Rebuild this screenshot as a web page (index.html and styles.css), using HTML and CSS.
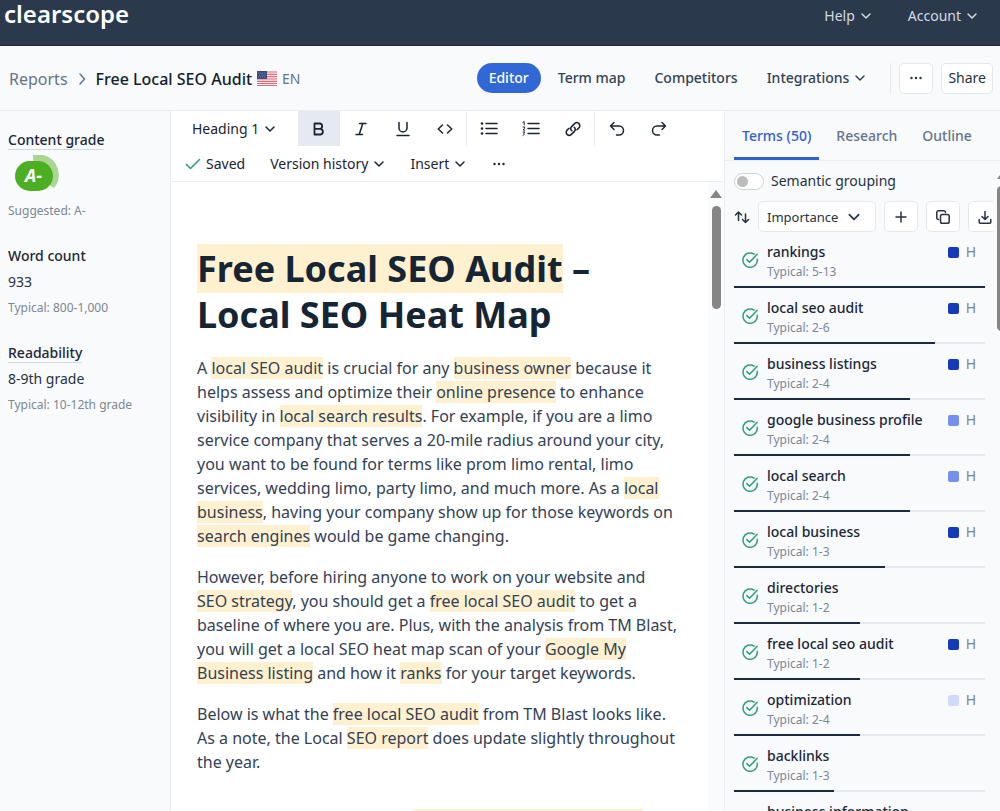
FILE: index.html
```html
<!DOCTYPE html>
<html lang="en">
<head>
<meta charset="utf-8">
<title>Free Local SEO Audit</title>
<link rel="stylesheet" href="styles.css">
</head>
<body>
<svg class="sprite" aria-hidden="true">
  <symbol id="chev" viewBox="0 0 12 12"><path d="M2 4 6 8 10 4"/></symbol>
  <symbol id="done" viewBox="0 0 18 18"><path d="M16.300 8.300A7.200 7.200 0 1 1 13.200 3.200"/><path d="M5.800 8.600 8.600 11.300 16.200 3.200"/></symbol>
  <symbol id="dots" viewBox="0 0 16 16"><g class="solid"><circle cx="3.500" cy="8" r="1.200"/><circle cx="8" cy="8" r="1.200"/><circle cx="12.500" cy="8" r="1.200"/></g></symbol>
</svg>
<div class="app">
  <header class="topbar">
    <a class="logo" href="#">clearscope</a>
    <nav class="topnav">
      <button>Help <svg class="ico s12"><use href="#chev"/></svg></button>
      <button>Account <svg class="ico s12"><use href="#chev"/></svg></button>
    </nav>
  </header>

  <div class="subbar">
    <nav class="crumbs">
      <a href="#">Reports</a>
      <svg class="ico s12 sep" viewBox="0 0 12 12"><path d="M4 1 8.500 6 4 11"/></svg>
      <strong>Free Local SEO Audit</strong>
      <svg class="flag" viewBox="0 0 20 15"><rect width="20" height="15" fill="#f5e9ec"/><path d="M0 1h20M0 3.400h20M0 5.700h20M0 8h20M0 10.300h20M0 12.500h20M0 14.500h20" stroke="#dc7079" stroke-width="1.200"/><rect width="10" height="8" fill="#3a4c80"/><path d="M1 2h8M2 4h7M1 6h8" stroke="#8792b5" stroke-width=".7" stroke-dasharray="1 1"/></svg>
      <span class="lang">EN</span>
    </nav>
    <nav class="views">
      <a class="pill" href="#">Editor</a>
      <a href="#">Term map</a>
      <a href="#">Competitors</a>
      <button>Integrations <svg class="ico s12"><use href="#chev"/></svg></button>
    </nav>
    <div class="actions">
      <button class="box" aria-label="More"><svg class="ico s16"><use href="#dots"/></svg></button>
      <button class="box">Share</button>
    </div>
  </div>

  <div class="main">
    <aside class="stats">
      <section>
        <h2 class="tip">Content grade</h2>
        <svg class="grade" viewBox="0 0 46 38" role="img" aria-label="Grade A minus"><path d="M19 0A20.500 20.500 0 0 1 40 33L20 20Z" fill="#a9d693"/><rect x="1" y="6" width="38" height="30" rx="15" fill="#4caf21"/><text x="11" y="27">A-</text></svg>
        <p class="hint">Suggested: A-</p>
      </section>
      <section>
        <h2>Word count</h2>
        <p>933</p>
        <p class="hint">Typical: 800-1,000</p>
      </section>
      <section>
        <h2 class="tip">Readability</h2>
        <p>8-9th grade</p>
        <p class="hint">Typical: 10-12th grade</p>
      </section>
    </aside>

    <main class="editor">
      <div class="tools">
        <div class="toolrow">
          <label class="pick style"><select aria-label="Text style"><option>Heading 1</option></select><svg class="ico s12"><use href="#chev"/></svg></label>
          <button class="tool on" aria-label="Bold"><svg class="ico s16" viewBox="0 0 16 16"><path d="M3.500 2.500h5.500a2.700 2.700 0 0 1 0 5.300H3.500zM3.500 7.800h6a2.900 2.900 0 0 1 0 5.700h-6z" stroke-width="1.800"/></svg></button>
          <button class="tool" aria-label="Italic"><svg class="ico s16" viewBox="0 0 16 16"><path d="M6.500 2.500H13M3 13.500h6.500M9.800 2.500 6.200 13.500"/></svg></button>
          <button class="tool" aria-label="Underline"><svg class="ico s16" viewBox="0 0 16 16"><path d="M4 1.500V7a4 4 0 0 0 8 0V1.500M2 14.500h12"/></svg></button>
          <button class="tool" aria-label="Code"><svg class="ico s16" viewBox="0 0 16 16"><path d="M5.500 4 1.200 8l4.300 4M10.500 4l4.300 4-4.300 4"/></svg></button>
          <button class="tool split" aria-label="Bulleted list"><svg class="ico s18" viewBox="0 0 18 18"><path d="M6 3.500h11M6 8.500h11M6 13.500h11"/><g class="solid"><circle cx="2" cy="3.500" r="1.300"/><circle cx="2" cy="8.500" r="1.300"/><circle cx="2" cy="13.500" r="1.300"/></g></svg></button>
          <button class="tool" aria-label="Numbered list"><svg class="ico s18" viewBox="0 0 18 18"><path d="M6 3.500h11M6 8.500h11M6 13.500h11"/><path stroke-width="1" d="M1 2.300 2.200 1.500V5M1 7h1.600v1.400L1 10h1.800M1 12h1.800l-1 1.300q1.600 1-.8 2.200"/></svg></button>
          <button class="tool" aria-label="Link"><svg class="ico s16" viewBox="0 0 16 16"><path d="M6.800 9.800A3 3 0 0 1 6.600 5.600L9.600 2.600A3 3 0 0 1 13.900 6.900L12 8.800M9.200 6.200A3 3 0 0 1 9.400 10.400L6.400 13.400A3 3 0 0 1 2.100 9.100L4 7.200"/></svg></button>
          <button class="tool split" aria-label="Undo"><svg class="ico s16" viewBox="0 0 16 16"><path d="M5 1.500 1.500 5 5 8.500M1.500 5h8.500a4.500 4.500 0 0 1 0 9H7.500"/></svg></button>
          <button class="tool" aria-label="Redo"><svg class="ico s16" viewBox="0 0 16 16"><path d="M11 1.500 14.500 5 11 8.500M14.500 5H6a4.500 4.500 0 0 0 0 9h2.500"/></svg></button>
        </div>
        <div class="toolrow second">
          <span class="saved"><svg class="ico s16" viewBox="0 0 16 16"><path d="M1.500 8.500 5.500 12.500 14.500 3.500"/></svg>Saved</span>
          <button>Version history <svg class="ico s12"><use href="#chev"/></svg></button>
          <button>Insert <svg class="ico s12"><use href="#chev"/></svg></button>
          <button aria-label="More tools"><svg class="ico s16"><use href="#dots"/></svg></button>
        </div>
      </div>
      <div class="canvas">
        <article class="doc">
          <h1><mark>Free Local SEO Audit</mark> – Local SEO Heat Map</h1>
          <p>A <mark>local SEO audit</mark> is crucial for any <mark>business owner</mark> because it helps assess and optimize their <mark>online presence</mark> to enhance visibility in <mark>local search results</mark>. For example, if you are a limo service company that serves a 20-mile radius around your city, you want to be found for terms like prom limo rental, limo services, wedding limo, party limo, and much more. As a <mark>local business</mark>, having your company show up for those keywords on <mark>search engines</mark> would be game changing.</p>
          <p>However, before hiring anyone to work on your website and <mark>SEO&nbsp;strategy</mark>, you should get a <mark>free local SEO audit</mark> to get a baseline of where you are. Plus, with the analysis from TM Blast, you will get a local SEO heat map scan of your <mark>Google My Business listing</mark> and how it <mark>ranks</mark> for your target keywords.</p>
          <p>Below is what the <mark>free local SEO audit</mark> from TM Blast looks like. As a note, the Local <mark>SEO report</mark> does update slightly throughout the year.</p>
          <div class="next"></div>
        </article>
        <div class="scroll"><svg viewBox="0 0 12 8"><path d="M6 0 12 8H0z"/></svg><i></i></div>
      </div>
    </main>

    <aside class="side">
      <nav class="tabs">
        <a class="cur" href="#">Terms (50)</a><a href="#">Research</a><a href="#">Outline</a>
      </nav>
      <div class="sidebody">
        <div class="terms">
          <label class="toggle"><input type="checkbox">Semantic grouping</label>
          <div class="filters">
            <svg class="ico s16" viewBox="0 0 16 16"><path d="M4.500 11.500V3M1.500 6l3-3 3 3M11.500 5v8.500M8.500 10.500l3 3 3-3"/></svg>
            <label class="pick sort"><select aria-label="Sort by"><option>Importance</option></select><svg class="ico s14"><use href="#chev"/></svg></label>
            <button class="box" aria-label="Add"><svg class="ico s14" viewBox="0 0 14 14"><path d="M7 2v10M2 7h10"/></svg></button>
            <button class="box" aria-label="Copy"><svg class="ico s14" viewBox="0 0 14 14"><rect x="4.500" y="4.500" width="8.700" height="8.700" rx="1.800"/><path d="M2.500 9.500A1.700 1.700 0 0 1 .8 7.800V2.500A1.700 1.700 0 0 1 2.500.8h5.300A1.700 1.700 0 0 1 9.500 2.500"/></svg></button>
            <button class="box" aria-label="Download"><svg class="ico s14" viewBox="0 0 14 14"><path d="M7 1.500v8M4 6.500l3 3 3-3M1.200 9.500v2.700a1 1 0 0 0 1 1h9.600a1 1 0 0 0 1-1V9.500"/></svg></button>
          </div>
          <ul class="list">
            <li><svg class="ico s18"><use href="#done"/></svg><div><b>rankings</b><small>Typical: 5-13</small></div><span class="imp"><i class="hi"></i>H</span><div class="bar"><i style="width:100%"></i></div></li>
            <li><svg class="ico s18"><use href="#done"/></svg><div><b>local seo audit</b><small>Typical: 2-6</small></div><span class="imp"><i class="hi"></i>H</span><div class="bar"><i style="width:80%"></i></div></li>
            <li><svg class="ico s18"><use href="#done"/></svg><div><b>business listings</b><small>Typical: 2-4</small></div><span class="imp"><i class="hi"></i>H</span><div class="bar"><i style="width:70%"></i></div></li>
            <li><svg class="ico s18"><use href="#done"/></svg><div><b>google business profile</b><small>Typical: 2-4</small></div><span class="imp"><i class="mid"></i>H</span><div class="bar"><i style="width:70%"></i></div></li>
            <li><svg class="ico s18"><use href="#done"/></svg><div><b>local search</b><small>Typical: 2-4</small></div><span class="imp"><i class="mid"></i>H</span><div class="bar"><i style="width:70%"></i></div></li>
            <li><svg class="ico s18"><use href="#done"/></svg><div><b>local business</b><small>Typical: 1-3</small></div><span class="imp"><i class="hi"></i>H</span><div class="bar"><i style="width:60%"></i></div></li>
            <li><svg class="ico s18"><use href="#done"/></svg><div><b>directories</b><small>Typical: 1-2</small></div><div class="bar"><i style="width:50%"></i></div></li>
            <li><svg class="ico s18"><use href="#done"/></svg><div><b>free local seo audit</b><small>Typical: 1-2</small></div><span class="imp"><i class="hi"></i>H</span><div class="bar"><i style="width:50%"></i></div></li>
            <li><svg class="ico s18"><use href="#done"/></svg><div><b>optimization</b><small>Typical: 2-4</small></div><span class="imp"><i class="low"></i>H</span><div class="bar"><i style="width:50%"></i></div></li>
            <li><svg class="ico s18"><use href="#done"/></svg><div><b>backlinks</b><small>Typical: 1-3</small></div><div class="bar"><i style="width:40%"></i></div></li>
            <li><svg class="ico s18"><use href="#done"/></svg><div><b>business information</b></div></li>
          </ul>
        </div>
        <div class="edge"><svg viewBox="0 0 12 8"><path d="M6 0 12 8H0z"/></svg><i></i></div>
      </div>
    </aside>
  </div>
</div>
</body>
</html>
```
FILE: styles.css
```css
* { box-sizing: border-box; }
body { margin: 0; font: 14px/20px "Noto Sans", "Open Sans", sans-serif; color: #263341; background: #f8fafc; }
button, select { font: inherit; color: inherit; background: none; border: 0; padding: 0; }
button { display: inline-flex; align-items: center; justify-content: center; gap: 5px; white-space: nowrap; }
a { color: inherit; text-decoration: none; }
h1, h2, p, ul { margin: 0; padding: 0; }
svg { display: block; flex: none; }
.sprite { position: absolute; width: 0; height: 0; }
.ico { fill: none; stroke: currentColor; stroke-width: 1.5; stroke-linecap: round; stroke-linejoin: round; }
.solid { fill: currentColor; stroke: none; }
.s12 { width: 12px; height: 12px; }
.s14 { width: 14px; height: 14px; }
.s16 { width: 16px; height: 16px; }
.s18 { width: 18px; height: 18px; }

.app { height: 100vh; display: flex; flex-direction: column; overflow: hidden; }
.topbar { flex: none; height: 46px; padding: 0 22px 14px 4px; display: flex; align-items: center; justify-content: space-between; background: #2b394d; border-bottom: 1px solid #1e2c3c; color: #d3dae3; }
.logo { font-size: 24px; font-weight: 600; line-height: 28px; margin-bottom: 4px; color: #fff; }
.topnav { display: flex; gap: 36px; }

.subbar { flex: none; height: 65px; display: flex; align-items: center; padding: 0 7px 0 9px; border-bottom: 1px solid #e9eef4; }
.crumbs { display: flex; align-items: center; padding-top: 1px; font-size: 16px; color: #64748b; white-space: nowrap; }
.crumbs .sep { margin: 0 8px; }
.crumbs strong { font-weight: 500; color: #131e2e; }
.crumbs .lang { font-size: 14px; }
.flag { width: 20px; height: 15px; margin: 0 5px; }
.views { margin-left: auto; display: flex; align-items: center; gap: 29px; font-weight: 500; color: #334354; }
.pill { padding: 5px 12px; margin-right: -12px; border-radius: 16px; background: #3268d5; color: #fff; }
.actions { display: flex; gap: 8px; margin-left: 24px; padding-left: 8px; border-left: 1px solid #e5eaf1; }
.box { height: 31px; min-width: 34px; padding: 0 6px; background: #fff; border: 1px solid #e3e8ef; border-radius: 5px; }

.main { flex: 1; min-height: 0; display: grid; grid-template-columns: 171px minmax(0, 1fr) 275px; }
.stats { padding: 19px 8px; border-right: 1px solid #e9eef4; display: flex; flex-direction: column; gap: 25px; }
.stats section { display: flex; flex-direction: column; align-items: flex-start; gap: 6px; }
.stats h2 { font-size: 14px; font-weight: 500; color: #1b2738; }
.stats .tip { border-bottom: 1px solid #d3d9e2; line-height: 19px; }
.hint { font-size: 12px; color: #7b8796; }
.grade { width: 46px; height: 38px; margin: -1px 6px 2px; }
.grade text { font: italic 700 18px "Open Sans", sans-serif; fill: #fff; }

.editor { display: flex; flex-direction: column; min-width: 0; min-height: 0; background: #fff; border-right: 1px solid #e9eef4; }
.tools { border-bottom: 1px solid #e9eef4; color: #1b2430; }
.toolrow { display: flex; height: 35px; }
.pick { display: grid; align-items: center; }
.pick select { grid-area: 1 / 1; appearance: none; width: 100%; height: 100%; }
.pick svg { grid-area: 1 / 1; justify-self: end; pointer-events: none; }
.style { width: 127px; padding: 0 22px 0 21px; }
.tool { width: 42px; }
.tool.on { background: #e5eaf2; }
.tool.split { width: 44px; border-left: 1px solid #e9eef4; }
.second { padding-left: 14px; gap: 25px; }
.saved { display: flex; align-items: center; gap: 5px; }
.saved svg { color: #2a9d78; }
.canvas { flex: 1; min-height: 0; overflow: hidden; display: flex; }
.doc { flex: 1; padding: 64px 26px 0 26px; color: #334155; }
.doc h1 { font-size: 36px; line-height: 46px; font-weight: 700; color: #152534; margin-bottom: 18px; }
.doc p { font-size: 16px; line-height: 24px; margin-bottom: 17px; }
mark { color: inherit; background: #fff0cf; }
.next { width: 229px; height: 40px; margin: 35px 0 0 217px; background: #fff0cf; }
.scroll { width: 16px; padding-top: 8px; background: #fafbfc; display: flex; flex-direction: column; align-items: center; gap: 8px; }
.scroll svg, .edge svg { width: 12px; height: 8px; fill: #858585; }
.scroll i { width: 9px; height: 103px; border-radius: 5px; background: #858585; }

.side { display: flex; flex-direction: column; min-width: 0; min-height: 0; }
.tabs { flex: none; display: flex; height: 50px; padding-left: 9px; border-bottom: 1px solid #e9eef4; gap: 9px; font-weight: 500; color: #64748b; }
.tabs a { padding: 15px 8px 0; }
.tabs .cur { color: #3260cc; border-bottom: 3px solid #3260cc; }
.sidebody { flex: 1; min-height: 0; display: flex; overflow: hidden; }
.terms { flex: 1; min-width: 0; padding: 10px 0 0 9px; overflow: hidden; }
.toggle { display: flex; align-items: center; gap: 7px; }
.toggle input { appearance: none; margin: 0; width: 30px; height: 17px; border: 1px solid #cdd0d4; border-radius: 9px; background: #fff; display: flex; align-items: center; padding-left: 2px; }
.toggle input::before { content: ""; width: 11px; height: 11px; border-radius: 50%; background: #bcbcbc; }
.filters { display: flex; align-items: center; gap: 8px; margin-top: 10px; }
.filters .box { flex: none; width: 34px; padding: 0; }
.sort { flex: none; width: 118px; height: 31px; padding: 0 14px 0 8px; background: #fff; border: 1px solid #e3e8ef; border-radius: 5px; font-size: 13px; }
.list { list-style: none; width: 251px; margin-top: 1px; }
.list li { height: 56px; display: grid; grid-template-columns: 33px 1fr auto; grid-template-rows: 53px 2px; align-items: start; }
.list li > .ico { color: #2f9e78; margin: 18px 0 0 7px; }
.list li > div:nth-child(2) { display: flex; flex-direction: column; padding-top: 9px; white-space: nowrap; }
.list b { font-weight: 500; color: #1b2738; }
.list small { font-size: 12px; color: #7b8796; }
.imp { display: flex; align-items: center; gap: 7px; padding: 9px 9px 0 0; color: #7b8796; }
.imp i { width: 11px; height: 11px; border-radius: 2px; }
.hi { background: #143bb8; }
.mid { background: #7590ec; }
.low { background: #cfdafa; }
.bar { grid-area: 2 / 1 / 3 / 4; height: 2px; background: #e4e9f0; }
.bar i { display: block; height: 2px; background: #1b2a3d; }
.edge { flex: none; width: 7px; padding: 10px 0 0 4px; overflow: hidden; }
.edge i { display: block; width: 9px; height: 145px; margin-top: 7px; border-radius: 5px; background: #858585; }
```
